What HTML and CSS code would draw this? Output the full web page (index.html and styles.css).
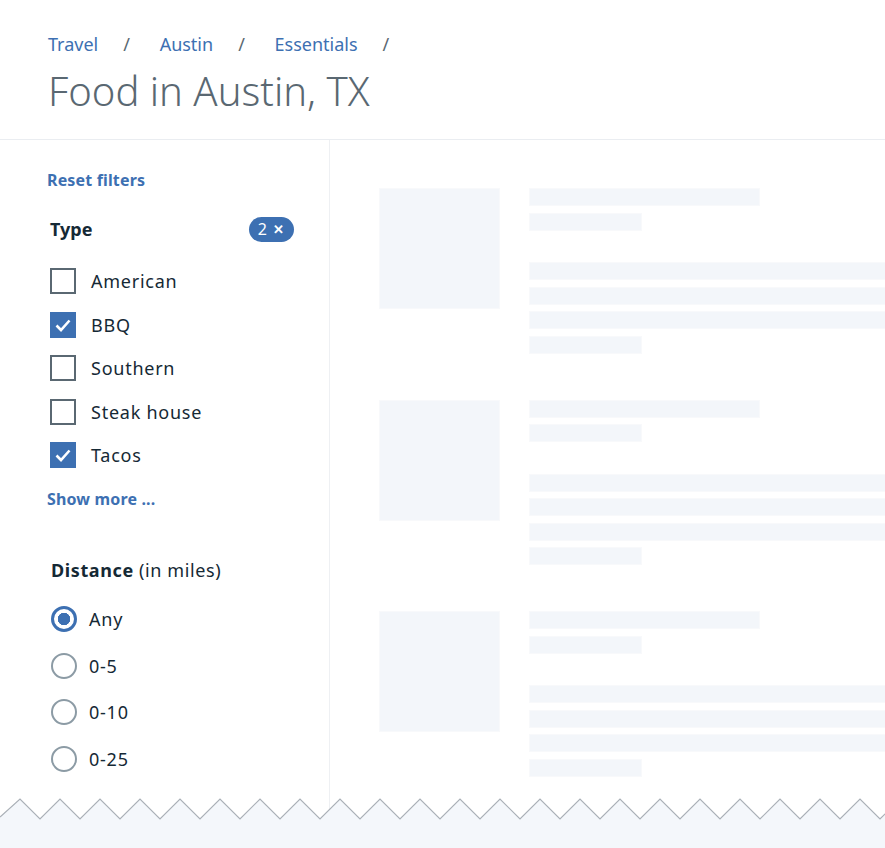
FILE: index.html
```html
<!DOCTYPE html>
<html lang="en">
<head>
    <meta charset="UTF-8">
    <meta name="viewport" content="width=device-width, initial-scale=1.0">
    <title>Food in Austin, TX</title>
    <link rel="stylesheet" href="styles.css">
</head>
<body>
    <div class="page">
        <header class="header">
            <nav class="breadcrumb">
                <a href="#">Travel</a><span class="sep">/</span>
                <a href="#">Austin</a><span class="sep">/</span>
                <a href="#">Essentials</a><span class="sep">/</span>
            </nav>
            <h1 class="title">Food in Austin, TX</h1>
        </header>

        <div class="main">
            <aside class="sidebar">
                <a href="#" class="link">Reset filters</a>

                <div class="group-head">
                    <span class="group-title">Type</span>
                    <span class="badge">2 <span class="badge-x">&#x2715;</span></span>
                </div>

                <ul class="options checks">
                    <li class="option"><span class="box"></span>American</li>
                    <li class="option"><span class="box checked"><svg viewBox="0 0 26 26" width="26" height="26"><path d="M6.5 13.5 L11 18 L19.5 8.5" fill="none" stroke="#fff" stroke-width="2.6"/></svg></span>BBQ</li>
                    <li class="option"><span class="box"></span>Southern</li>
                    <li class="option"><span class="box"></span>Steak house</li>
                    <li class="option"><span class="box checked"><svg viewBox="0 0 26 26" width="26" height="26"><path d="M6.5 13.5 L11 18 L19.5 8.5" fill="none" stroke="#fff" stroke-width="2.6"/></svg></span>Tacos</li>
                </ul>

                <a href="#" class="link more">Show more ...</a>

                <div class="group-title distance"><b>Distance</b> (in miles)</div>

                <ul class="options radios">
                    <li class="option"><span class="dot selected"></span>Any</li>
                    <li class="option"><span class="dot"></span>0-5</li>
                    <li class="option"><span class="dot"></span>0-10</li>
                    <li class="option"><span class="dot"></span>0-25</li>
                </ul>
            </aside>

            <section class="content">
                <div class="card">
                    <div class="sk thumb"></div>
                    <div class="lines">
                        <div class="sk line w1"></div>
                        <div class="sk line w2"></div>
                        <div class="sk line full gap"></div>
                        <div class="sk line full"></div>
                        <div class="sk line full"></div>
                        <div class="sk line w2"></div>
                    </div>
                </div>
                <div class="card">
                    <div class="sk thumb"></div>
                    <div class="lines">
                        <div class="sk line w1"></div>
                        <div class="sk line w2"></div>
                        <div class="sk line full gap"></div>
                        <div class="sk line full"></div>
                        <div class="sk line full"></div>
                        <div class="sk line w2"></div>
                    </div>
                </div>
                <div class="card">
                    <div class="sk thumb"></div>
                    <div class="lines">
                        <div class="sk line w1"></div>
                        <div class="sk line w2"></div>
                        <div class="sk line full gap"></div>
                        <div class="sk line full"></div>
                        <div class="sk line full"></div>
                        <div class="sk line w2"></div>
                    </div>
                </div>
            </section>
        </div>

        <svg class="torn" viewBox="0 0 885 51" width="885" height="51" preserveAspectRatio="none">
            <polygon fill="#f4f7fb" points="0,20 20,2 40,22 60,2 80,22 100,2 120,22 140,2 160,22 180,2 200,22 220,2 240,22 260,2 280,22 300,2 320,22 340,2 360,22 380,2 400,22 420,2 440,22 460,2 480,22 500,2 520,22 540,2 560,22 580,2 600,22 620,2 640,22 660,2 680,22 700,2 720,22 740,2 760,22 780,2 800,22 820,2 840,22 860,2 880,22 900,2 900,51 0,51"/>
            <polyline fill="none" stroke="#aab0b7" stroke-width="1.2" points="0,20 20,2 40,22 60,2 80,22 100,2 120,22 140,2 160,22 180,2 200,22 220,2 240,22 260,2 280,22 300,2 320,22 340,2 360,22 380,2 400,22 420,2 440,22 460,2 480,22 500,2 520,22 540,2 560,22 580,2 600,22 620,2 640,22 660,2 680,22 700,2 720,22 740,2 760,22 780,2 800,22 820,2 840,22 860,2 880,22 900,2"/>
        </svg>
    </div>
</body>
</html>
```

FILE: styles.css
```css
body {
    margin: 0;
    font-family: "Noto Sans", "Open Sans", sans-serif;
    color: #152935;
    background: #fff;
}
a {
    text-decoration: none;
    color: #3d70b2;
}
ul {
    list-style: none;
    margin: 0;
    padding: 0;
}
.page {
    position: relative;
    height: 848px;
    overflow: hidden;
}

/* header */
.header {
    height: 109px;
    padding: 30px 48px 0;
    border-bottom: 1px solid #eaedf1;
}
.breadcrumb {
    font-size: 18px;
    line-height: 28px;
}
.breadcrumb .sep {
    color: #5a6872;
    margin: 0 25px;
}
.title {
    margin: 9px 0 0;
    font-size: 40px;
    line-height: 48px;
    font-weight: 300;
    color: #5a6872;
}

/* layout */
.main {
    display: flex;
}
.sidebar {
    width: 247px;
    flex-shrink: 0;
    padding: 28px 35px 0 47px;
    border-right: 1px solid #eef0f3;
    height: 720px;
}
.link {
    display: block;
    font-size: 16px;
    line-height: 24px;
    font-weight: 700;
    letter-spacing: 0.15px;
}
.group-head {
    display: flex;
    justify-content: space-between;
    align-items: center;
    margin: 24px 0 0 3px;
    height: 26px;
}
.group-title {
    font-size: 18px;
    font-weight: 700;
    line-height: 26px;
}
.badge {
    display: flex;
    align-items: center;
    gap: 6px;
    height: 25px;
    padding: 0 10px 0 9px;
    border-radius: 13px;
    background: #3d70b2;
    color: #fff;
    font-size: 16px;
}
.badge-x {
    font-size: 13px;
    font-weight: 700;
}
.options {
    display: flex;
    flex-direction: column;
}
.option {
    display: flex;
    align-items: center;
    height: 26px;
    font-size: 18px;
    letter-spacing: 0.75px;
}
.checks {
    margin: 26px 0 0 3px;
    gap: 17.5px;
}
.box {
    box-sizing: border-box;
    width: 26px;
    height: 26px;
    margin-right: 15px;
    border: 2px solid #5a6872;
}
.box.checked {
    border: none;
    background: #3d70b2;
}
.box svg {
    display: block;
}
.more {
    margin-top: 19px;
}
.distance {
    margin: 46px 0 0 4px;
    font-weight: 400;
    letter-spacing: 0.6px;
}
.radios {
    margin: 23px 0 0 4px;
    gap: 20.7px;
}
.dot {
    box-sizing: border-box;
    width: 26px;
    height: 26px;
    margin-right: 12px;
    border-radius: 50%;
    border: 2px solid #8c9ba5;
}
.dot.selected {
    border: 3px solid #3d70b2;
    background: radial-gradient(circle, #3d70b2 0 6px, #fff 6.5px);
}

/* skeleton list */
.content {
    flex: 1;
    padding: 49px 0 0 50px;
    overflow: hidden;
}
.card {
    display: flex;
    gap: 31px;
    margin-bottom: 48px;
}
.sk {
    background: #f3f6fa;
    box-shadow: 0 0 0 1px #f8f9fb;
}
.thumb {
    width: 119px;
    height: 119px;
    flex-shrink: 0;
}
.lines {
    display: flex;
    flex-direction: column;
    gap: 8.5px;
}
.line {
    height: 16px;
}
.w1 {
    width: 229px;
}
.w2 {
    width: 111px;
}
.full {
    width: 420px;
}
.gap {
    margin-top: 25px;
}

.torn {
    position: absolute;
    left: 0;
    bottom: 0;
    display: block;
}
```
